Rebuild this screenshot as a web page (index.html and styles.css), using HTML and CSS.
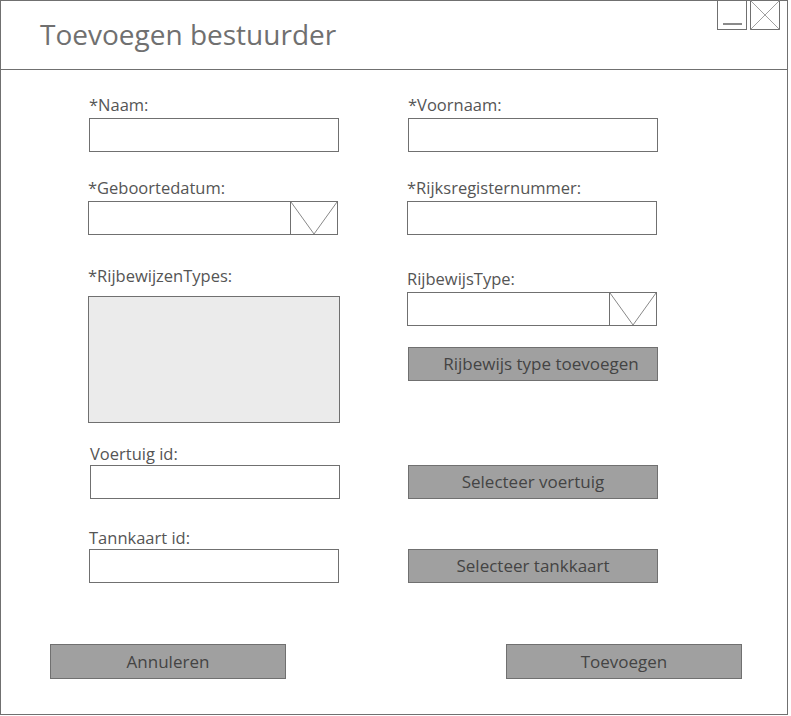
FILE: index.html
```html
<!DOCTYPE html>
<html lang="nl">
<head>
<meta charset="utf-8">
<title>Toevoegen bestuurder</title>
<link rel="stylesheet" href="styles.css">
</head>
<body>
<div class="window">
  <header class="header">
    <h1 class="title">Toevoegen bestuurder</h1>
    <div class="controls">
      <span class="ctrl ctrl-min"><span class="min-bar"></span></span>
      <span class="ctrl ctrl-close">
        <svg width="30" height="30" viewBox="0 0 30 30"><path d="M0 0L30 30M30 0L0 30" stroke="#888" stroke-width="0.8" fill="none"/></svg>
      </span>
    </div>
  </header>
  <main class="form">
    <div class="row row-1">
      <div class="field">
        <label class="label">*Naam:</label>
        <div class="input"></div>
      </div>
      <div class="field">
        <label class="label">*Voornaam:</label>
        <div class="input"></div>
      </div>
    </div>
    <div class="row row-2">
      <div class="field shift-l">
        <label class="label">*Geboortedatum:</label>
        <div class="input select">
          <span class="select-arrow"><svg width="46" height="32" viewBox="0 0 46 32" preserveAspectRatio="none"><path d="M0 0L23 32L46 0" stroke="#888" stroke-width="1" fill="none"/></svg></span>
        </div>
      </div>
      <div class="field shift-l">
        <label class="label">*Rijksregisternummer:</label>
        <div class="input"></div>
      </div>
    </div>
    <div class="row row-3">
      <div class="field shift-l">
        <label class="label label-list">*RijbewijzenTypes:</label>
        <div class="listbox"></div>
      </div>
      <div class="col-right">
        <div class="field shift-l">
          <label class="label">RijbewijsType:</label>
          <div class="input select">
            <span class="select-arrow"><svg width="46" height="32" viewBox="0 0 46 32" preserveAspectRatio="none"><path d="M0 0L23 32L46 0" stroke="#888" stroke-width="1" fill="none"/></svg></span>
          </div>
        </div>
        <button class="btn btn-add shift-l2">Rijbewijs type toevoegen</button>
      </div>
    </div>
    <div class="row row-4">
      <div class="field shift-r">
        <label class="label label-tight">Voertuig id:</label>
        <div class="input"></div>
      </div>
      <button class="btn">Selecteer voertuig</button>
    </div>
    <div class="row row-5">
      <div class="field">
        <label class="label label-tighter">Tannkaart id:</label>
        <div class="input"></div>
      </div>
      <button class="btn">Selecteer tankkaart</button>
    </div>
  </main>
  <footer class="footer">
    <button class="btn btn-wide">Annuleren</button>
    <button class="btn btn-wide">Toevoegen</button>
  </footer>
</div>
</body>
</html>
```

FILE: styles.css
```css
* { box-sizing: border-box; }

html, body {
  margin: 0;
  padding: 0;
  background: #ffffff;
}

body {
  font-family: "Open Sans", "Noto Sans", "Liberation Sans", sans-serif;
  color: #555555;
}

.window {
  position: relative;
  width: 788px;
  height: 715px;
  border: 1px solid #707070;
  display: flex;
  flex-direction: column;
}

.header {
  height: 69px;
  border-bottom: 1px solid #707070;
  flex: 0 0 auto;
  display: flex;
  align-items: flex-start;
}

.title {
  margin: 14px 0 0 39px;
  font-size: 28px;
  font-weight: 400;
  line-height: 38px;
  color: #707070;
  letter-spacing: 0;
}

.controls {
  position: absolute;
  top: -1px;
  right: 7px;
  display: flex;
  gap: 3px;
}

.ctrl {
  display: block;
  width: 30px;
  height: 30px;
  border: 1px solid #707070;
  background: #fff;
  position: relative;
}

.ctrl-close svg {
  position: absolute;
  left: -1px;
  top: -1px;
}

.min-bar {
  position: absolute;
  left: 5px;
  right: 4px;
  top: 22px;
  height: 2px;
  background: #8a8a8a;
}

.form {
  padding-left: 88px;
  flex: 0 0 auto;
}

.row {
  display: grid;
  grid-template-columns: 250px 250px;
  column-gap: 69px;
  align-items: end;
}

.row-1 { margin-top: 24px; }
.row-2 { margin-top: 25px; }
.row-3 { margin-top: 30px; align-items: start; }
.row-4 { margin-top: 20px; }
.row-5 { margin-top: 29px; }

.field {
  display: flex;
  flex-direction: column;
}

.label {
  display: block;
  font-size: 16.5px;
  line-height: 22px;
  height: 22px;
  margin-bottom: 2px;
  color: #555555;
  white-space: nowrap;
}

.label-list { margin-bottom: 9px; }
.label-tight { margin-bottom: 0; }
.label-tighter { margin-bottom: 0; margin-top: -1px; }

.shift-l { margin-left: -1px; }
.shift-l2 { margin-left: -2px; }
.shift-r { margin-left: 1px; }

.input {
  width: 250px;
  height: 34px;
  border: 1px solid #707070;
  background: #ffffff;
}

.select {
  display: flex;
  justify-content: flex-end;
}

.select-arrow {
  display: block;
  width: 47px;
  height: 32px;
  border-left: 1px solid #707070;
  flex: 0 0 auto;
}

.select-arrow svg {
  display: block;
}

.listbox {
  width: 252px;
  height: 127px;
  border: 1px solid #707070;
  background: #ebebeb;
}

.col-right {
  display: flex;
  flex-direction: column;
  padding-top: 3px;
}

.btn {
  width: 250px;
  height: 34px;
  border: 1px solid #707070;
  background: #a0a0a0;
  color: #444444;
  font-family: inherit;
  font-size: 17px;
  line-height: 20px;
  padding: 0;
  margin: 0;
  text-align: center;
  border-radius: 0;
}

.btn-add {
  margin-top: 21px;
  padding-left: 16px;
}

.footer {
  display: flex;
  justify-content: space-between;
  padding: 0 45px 0 49px;
  margin-top: 61px;
}

.btn-wide {
  width: 236px;
  height: 35px;
}
```
